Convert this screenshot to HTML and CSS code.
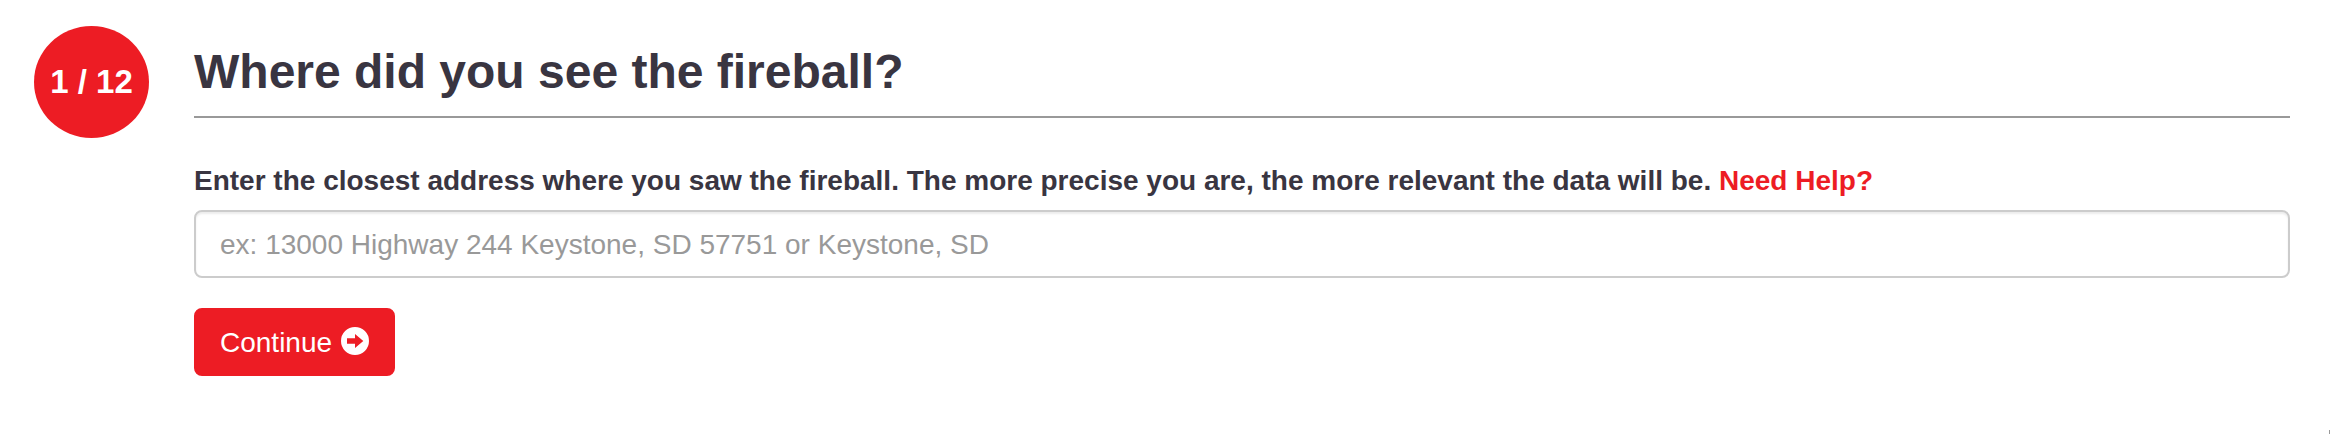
FILE: index.html
```html
<!DOCTYPE html>
<html lang="en">
<head>
<meta charset="utf-8">
<meta name="viewport" content="width=device-width, initial-scale=1">
<title>Report a fireball</title>
<link rel="stylesheet" href="styles.css">
</head>
<body>
<main class="step">
  <div class="step-count">1 / 12</div>
  <form class="step-body">
    <h1 class="step-title">Where did you see the fireball?</h1>
    <div class="prompt">
      <label for="address">Enter the closest address where you saw the fireball. The more precise you are, the more relevant the data will be.</label>
      <a class="help" href="#help">Need Help?</a>
    </div>
    <input class="address" id="address" type="text" placeholder="ex: 13000 Highway 244 Keystone, SD 57751 or Keystone, SD">
    <button class="continue" type="button">Continue
      <svg class="arrow" viewBox="0 0 28 28" aria-hidden="true"><path fill="currentColor" fill-rule="evenodd" d="M14 0a14 14 0 1 1 0 28a14 14 0 1 1 0-28ZM6 11.300V16.700H14V21L22.300 14L14 7V11.300Z"/></svg>
    </button>
  </form>
</main>
<div class="corner"></div>
</body>
</html>
```
FILE: styles.css
```css
* {
  box-sizing: border-box;
}

body {
  margin: 0;
  min-height: 100vh;
  position: relative;
  overflow: hidden;
  background: #fff;
  color: #393541;
  font-family: "Helvetica Neue", "Liberation Sans", Arial, sans-serif;
  font-size: 28px;
  line-height: 40px;
}

.step {
  display: flex;
  align-items: flex-start;
  gap: 45px;
  padding: 26px 40px 40px 34px;
}

.step-count {
  display: flex;
  flex: none;
  align-items: center;
  justify-content: center;
  width: 115px;
  height: 112px;
  border-radius: 50%;
  background: #ed1c24;
  color: #fff;
  font-size: 33px;
  font-weight: bold;
}

.step-body {
  flex: 1;
  min-width: 0;
}

.step-title {
  margin: 0 0 43px;
  padding: 18px 0 16px;
  border-bottom: 2px solid #999;
  font-size: 48px;
  line-height: 56px;
}

.prompt {
  margin-bottom: 9px;
  font-weight: bold;
}

.help {
  color: #ed1c24;
  text-decoration: none;
}

.address {
  display: block;
  width: 100%;
  height: 68px;
  margin: 0 0 30px;
  padding: 14px 24px 12px;
  border: 2px solid #ccc;
  border-radius: 8px;
  background: #fff;
  box-shadow: inset 0 2px 2px rgba(0, 0, 0, 0.075);
  color: #555;
  font: inherit;
}

.address::placeholder {
  color: #999;
  opacity: 1;
}

.continue {
  display: flex;
  align-items: center;
  gap: 9px;
  height: 68px;
  padding: 14px 24px 12px;
  border: 2px solid #ed1c24;
  border-radius: 8px;
  background: #ed1c24;
  color: #fff;
  font: inherit;
  cursor: pointer;
}

.arrow {
  width: 28px;
  height: 28px;
  margin-bottom: 4px;
}

.corner {
  position: absolute;
  right: 0;
  bottom: 0;
  width: 1px;
  height: 4px;
  background: #999;
}
```
